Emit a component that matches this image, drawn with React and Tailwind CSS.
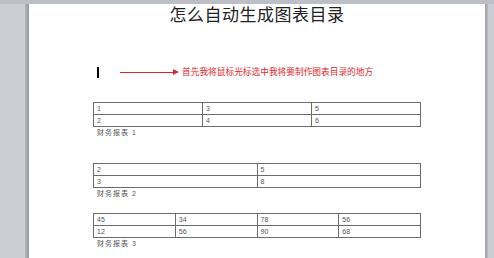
import React from "react";

const TABLES = [
  { rows: [["1", "3", "5"], ["2", "4", "6"]], caption: "财务报表 1", mt: "mt-[24px]" },
  { rows: [["2", "5"], ["3", "8"]], caption: "财务报表 2", mt: "mt-[24px]" },
  { rows: [["45", "34", "78", "56"], ["12", "56", "90", "68"]], caption: "财务报表 3", mt: "mt-[13px]" },
];

function DocTable({ rows, caption, mt }) {
  return (
    <div className={`${mt} ml-[64px] w-[328px]`}>
      <table className="w-full border-collapse table-fixed">
        <tbody>
          {rows.map((row, i) => (
            <tr key={i} className="h-[12px]">
              {row.map((cell, j) => (
                <td
                  key={j}
                  className="border border-[#6b6b6b] pl-[3px] py-0 text-[7px] leading-[10px] text-[#555] align-middle"
                >
                  {cell}
                </td>
              ))}
            </tr>
          ))}
        </tbody>
      </table>
      <div className="pl-[4px] text-[7px] leading-[12px] text-[#555] tracking-[1px]">{caption}</div>
    </div>
  );
}

export default function App() {
  return (
    <div
      className="w-[494px] h-[258px] bg-[#cdd1d6] flex flex-col overflow-hidden"
      style={{ fontFamily: '"Liberation Sans", "Noto Sans CJK SC", sans-serif' }}
    >
      <div className="h-[4px] bg-[#bcc0c6] shrink-0"></div>
      <div className="flex flex-1">
        <div className="w-[25px] bg-[#cbcfd4]"></div>
        <div className="w-[4px] bg-gradient-to-r from-[#b4b8be] to-[#959aa0]"></div>

        {/* page */}
        <div className="flex-1 bg-white pt-[2px]">
          <div className="text-center text-[17px] leading-[20px] text-[#222] font-normal tracking-[0.5px]">
            怎么自动生成图表目录
          </div>

          <div className="mt-[40px] flex items-center h-[12px]">
            <div className="ml-[68px] w-[2px] h-[11px] bg-black"></div>
            <div className="ml-[21px] flex items-center">
              <div className="w-[53px] h-px bg-[#d9262a]"></div>
              <svg width="6" height="6" viewBox="0 0 6 6">
                <path d="M0 0 L6 3 L0 6 Z" fill="#d9262a" />
              </svg>
            </div>
            <div className="ml-[3px] text-[8.7px] leading-[12px] text-[#e0262b]">
              首先我将鼠标光标选中我将要制作图表目录的地方
            </div>
          </div>

          {TABLES.map((t, i) => (
            <DocTable key={i} {...t} />
          ))}
        </div>

        <div className="w-[3px] bg-gradient-to-r from-[#9da1a7] to-[#b8bcc2]"></div>
        <div className="w-[6px] bg-[#c9cdd3]"></div>
      </div>
    </div>
  );
}
